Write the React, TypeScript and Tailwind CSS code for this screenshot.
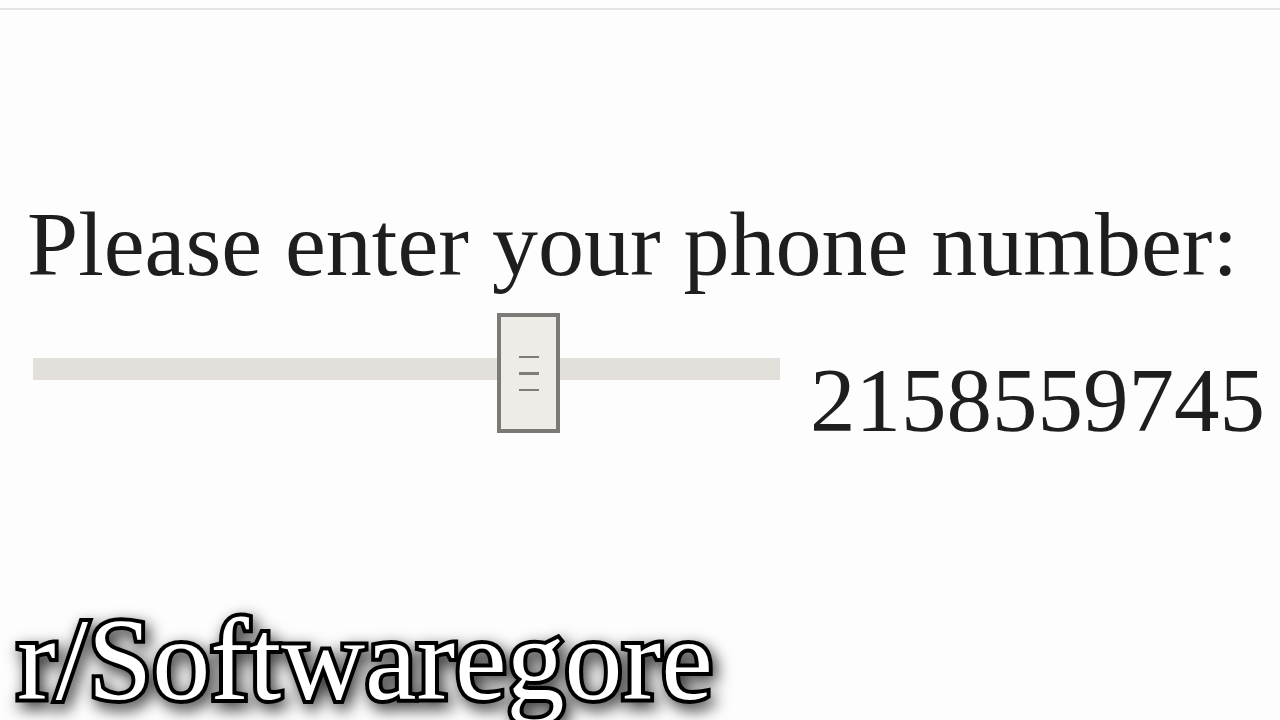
import React from "react";

const serif = "font-['Liberation_Serif','Times_New_Roman',serif]";

function Slider() {
  return (
    <div className="relative w-[747px] h-[120px] flex flex-col pt-[45px]">
      <div className="h-[22px] w-full bg-[#e3e0db]" />
      <div className="absolute left-[464px] top-0 w-[63px] h-[120px] border-[4px] border-[#7b7a76] bg-[#efece8] flex flex-col items-center justify-center gap-[14px]">
        <div className="w-[20px] h-[2px] bg-[#7f7d79]" />
        <div className="w-[20px] h-[3px] bg-[#7f7d79]" />
        <div className="w-[20px] h-[2px] bg-[#7f7d79]" />
      </div>
    </div>
  );
}

export default function App() {
  return (
    <div className="relative w-full h-[720px] overflow-hidden bg-[#fdfdfd]">
      <div className="pt-[8px]">
        <div className="h-[2px] w-full bg-[#e4e4e4]" />
      </div>
      <h1 className={`${serif} mt-[188px] pl-[27px] text-[92px] leading-none text-[#1e1e1e] whitespace-nowrap`}>
        Please enter your phone number:
      </h1>
      <div className="flex items-start mt-[23px] pl-[33px]">
        <Slider />
        <span className={`${serif} ml-[30px] mt-[42px] text-[91px] leading-none text-[#1e1e1e]`}>
          2158559745
        </span>
      </div>
      <div
        className={`${serif} absolute left-[17px] top-[602px] text-[116px] leading-none text-white whitespace-nowrap [-webkit-text-stroke:8px_black] [paint-order:stroke_fill] [filter:drop-shadow(4px_6px_8px_rgba(0,0,0,0.8))]`}
      >
        r/Softwaregore
      </div>
    </div>
  );
}
